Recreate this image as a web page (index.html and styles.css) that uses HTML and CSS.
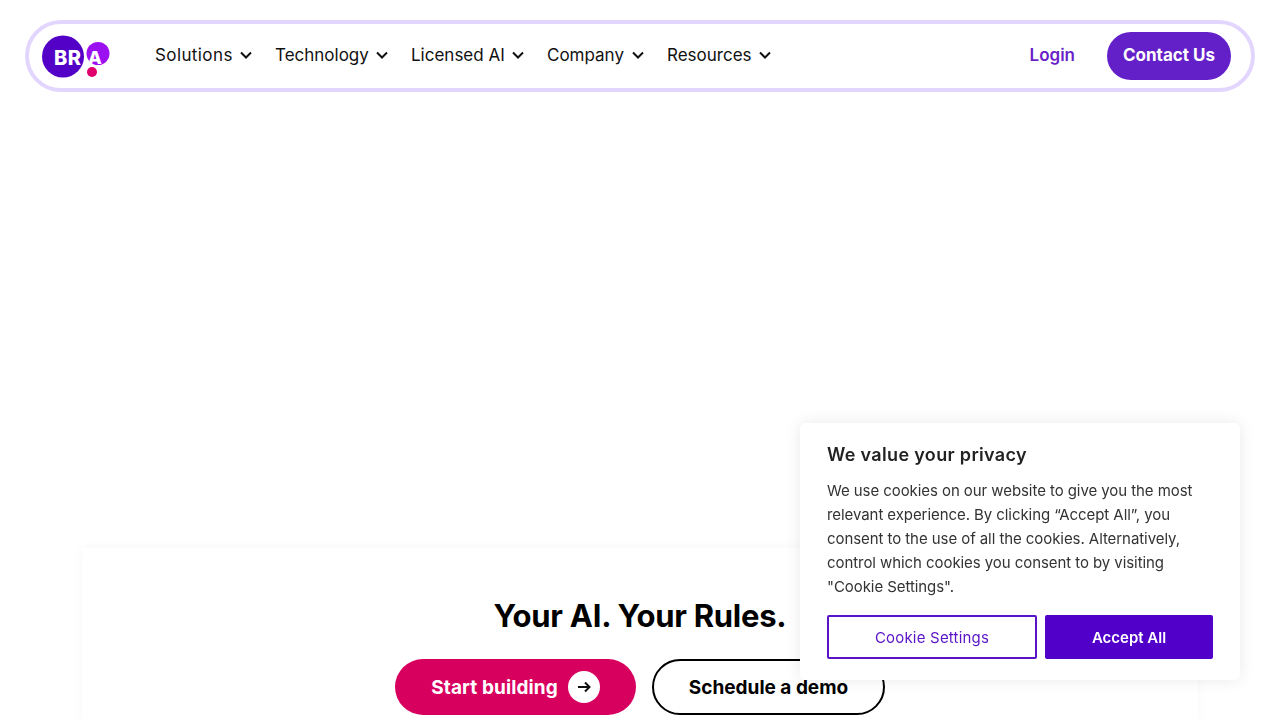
FILE: index.html
```html
<!DOCTYPE html>
<html>
   <head>
      <title>BRIA</title>
      <link rel="stylesheet" href="styles.css">
   </head>
   <body>
      <header class="nav">
         <a class="logo" href="#">
            <svg width="68" height="44" viewBox="0 0 68 44">
               <circle cx="21" cy="22.500" r="21" fill="#5300c7"/>
               <circle cx="56" cy="19.500" r="11.500" fill="#9a10f0"/>
               <circle cx="50" cy="38" r="5" fill="#e0006c"/>
               <text x="12" y="31" class="logo-text">BR</text>
               <text x="46" y="30" class="logo-text logo-a">A</text>
            </svg>
         </a>
         <nav class="menu">
            <a href="#">Solutions <svg class="chev" width="12" height="8" viewBox="0 0 12 8"><path d="M1 1.500l5 5 5-5"/></svg></a>
            <a href="#">Technology <svg class="chev" width="12" height="8" viewBox="0 0 12 8"><path d="M1 1.500l5 5 5-5"/></svg></a>
            <a href="#">Licensed AI <svg class="chev" width="12" height="8" viewBox="0 0 12 8"><path d="M1 1.500l5 5 5-5"/></svg></a>
            <a href="#">Company <svg class="chev" width="12" height="8" viewBox="0 0 12 8"><path d="M1 1.500l5 5 5-5"/></svg></a>
            <a href="#">Resources <svg class="chev" width="12" height="8" viewBox="0 0 12 8"><path d="M1 1.500l5 5 5-5"/></svg></a>
         </nav>
         <a class="login" href="#">Login</a>
         <a class="contact" href="#">Contact Us</a>
      </header>
      <main class="hero">
         <h1>Your AI. Your Rules.</h1>
         <div class="actions">
            <a class="btn btn-start" href="#">Start building
               <span class="arrow"><svg width="14" height="12" viewBox="0 0 14 12"><path d="M1 6h11.500M8 1.500l4.500 4.500-4.500 4.500"/></svg></span>
            </a>
            <a class="btn btn-demo" href="#">Schedule a demo</a>
         </div>
      </main>
      <div class="cookie">
         <h2>We value your privacy</h2>
         <p>We use cookies on our website to give you the most relevant experience. By clicking “Accept All”, you consent to the use of all the cookies. Alternatively, control which cookies you consent to by visiting "Cookie Settings".</p>
         <div class="cookie-row">
            <button class="cookie-settings">Cookie Settings</button>
            <button class="cookie-accept">Accept All</button>
         </div>
      </div>
   </body>
</html>
```

FILE: styles.css
```css
html, body {
   height: 720px;
   overflow: hidden;
}
body {
   margin: 0;
   background: #fff;
   color: #111;
   font-family: Inter, "Liberation Sans", sans-serif;
}
a {
   color: inherit;
   text-decoration: none;
}
.nav {
   display: flex;
   align-items: center;
   box-sizing: border-box;
   height: 72px;
   margin: 20px 25px 0;
   padding: 0 20px 0 13px;
   border: 4px solid #e2d6fe;
   border-radius: 36px;
}
.logo {
   display: flex;
   width: 113px;
}
.logo-text {
   fill: #fff;
   font: 800 20px Inter, sans-serif;
   letter-spacing: .5px;
}
.logo-a {
   font-size: 18px;
}
.menu {
   display: grid;
   grid-template-columns: 120px 136px 136px 120px 107px;
   flex: 1;
   padding-bottom: 2px;
   font-size: 17px;
}
.menu a {
   display: flex;
   align-items: center;
   justify-content: space-between;
   padding-right: 23px;
}
.menu a:first-child {
   letter-spacing: .4px;
}
.menu a:last-child {
   padding-right: 3px;
}
.chev {
   fill: none;
   stroke: #111;
   stroke-width: 2;
}
.login {
   margin-right: 32px;
   padding-bottom: 2px;
   color: #6a1fc9;
   font-size: 17px;
   font-weight: 600;
}
.contact {
   padding: 13px 16px 15px;
   border-radius: 24px;
   background: #6420c8;
   color: #fff;
   font-size: 17px;
   font-weight: 700;
   line-height: 20px;
}
.hero {
   box-sizing: border-box;
   height: 172px;
   margin: 456px 82px 0;
   padding-top: 49px;
   box-shadow: 0 0 10px rgba(0, 0, 0, .04);
   text-align: center;
}
.hero h1 {
   margin: 0 0 24px;
   color: #000;
   font-size: 31px;
   letter-spacing: -.25px;
   line-height: 38px;
   font-weight: 700;
}
.actions {
   display: flex;
   justify-content: center;
   gap: 16px;
}
.btn {
   display: flex;
   align-items: center;
   justify-content: center;
   box-sizing: border-box;
   height: 56px;
   border-radius: 28px;
   font-size: 19px;
   font-weight: 700;
}
.btn-start {
   gap: 10px;
   width: 241px;
   background: #d8005f;
   color: #fff;
   letter-spacing: .1px;
}
.arrow {
   display: flex;
   align-items: center;
   justify-content: center;
   width: 32px;
   height: 32px;
   border-radius: 50%;
   background: #fff;
}
.arrow svg {
   fill: none;
   stroke: #111;
   stroke-width: 2;
}
.btn-demo {
   width: 233px;
   border: 2px solid #000;
   color: #000;
}
.cookie {
   position: fixed;
   left: 800px;
   top: 423px;
   box-sizing: border-box;
   width: 440px;
   height: 257px;
   padding: 20px 27px;
   border-radius: 6px;
   background: #fff;
   box-shadow: 0 0 16px rgba(0, 0, 0, .09);
}
.cookie h2 {
   margin: 0 0 12px;
   color: #222;
   font-size: 18px;
   letter-spacing: .33px;
   line-height: 24px;
   font-weight: 600;
}
.cookie p {
   margin: 0 0 16px;
   color: #333;
   font-size: 15px;
   letter-spacing: -.07px;
   line-height: 24px;
}
.cookie-row {
   display: flex;
   gap: 8px;
}
.cookie-row button {
   height: 44px;
   border-radius: 2px;
   font-family: inherit;
   font-size: 15px;
}
.cookie-settings {
   width: 210px;
   border: 2px solid #5a14c8;
   background: #fff;
   color: #5a14c8;
   letter-spacing: .2px;
}
.cookie-accept {
   width: 168px;
   border: 0;
   background: #5000c8;
   color: #fff;
   font-weight: 600;
}
```
